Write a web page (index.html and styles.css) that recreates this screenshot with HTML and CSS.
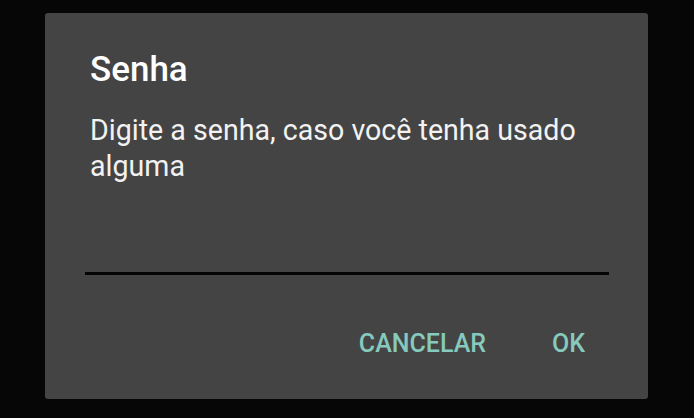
FILE: index.html
```html
<!DOCTYPE html>
<html lang="pt">
<head>
    <meta charset="UTF-8">
    <meta name="viewport" content="width=device-width, initial-scale=1.0">
    <title>Senha</title>
    <link rel="stylesheet" href="styles.css">
</head>
<body>
    <div class="dialog">
        <h2 class="title">Senha</h2>
        <p class="message">Digite a senha, caso você tenha usado alguma</p>
        <input class="password" type="password" aria-label="Senha">
        <div class="actions">
            <button class="action">Cancelar</button>
            <button class="action">OK</button>
        </div>
    </div>
</body>
</html>
```

FILE: styles.css
```css
:root {
    font-family: Roboto, 'Noto Sans', sans-serif;
    background-color: #060606;
}
body {
    margin: 0;
    padding: 13px 46px 19px 45px;
}
.dialog {
    width: 603px;
    height: 386px;
    box-sizing: border-box;
    background-color: #444444;
    border-radius: 3px;
    padding: 37px 39px 0 40px;
    display: flex;
    flex-direction: column;
}
.title {
    margin: 0 0 22px 5px;
    font-size: 35px;
    line-height: 40px;
    font-weight: 500;
    color: #ffffff;
}
.message {
    margin: 0 0 0 5px;
    font-size: 28.6px;
    line-height: 36px;
    color: #f2f2f2;
}
.password {
    margin: 53px 0 0 0;
    height: 35px;
    padding: 0;
    border: none;
    border-bottom: 3px solid #050505;
    background: transparent;
    outline: none;
}
.actions {
    display: flex;
    justify-content: flex-end;
    gap: 66px;
    margin: 55px 24px 0 0;
}
.action {
    padding: 0;
    border: none;
    background: transparent;
    font-family: inherit;
    font-size: 25px;
    line-height: 28px;
    font-weight: 500;
    text-transform: uppercase;
    color: #86cabd;
    cursor: pointer;
}
```
